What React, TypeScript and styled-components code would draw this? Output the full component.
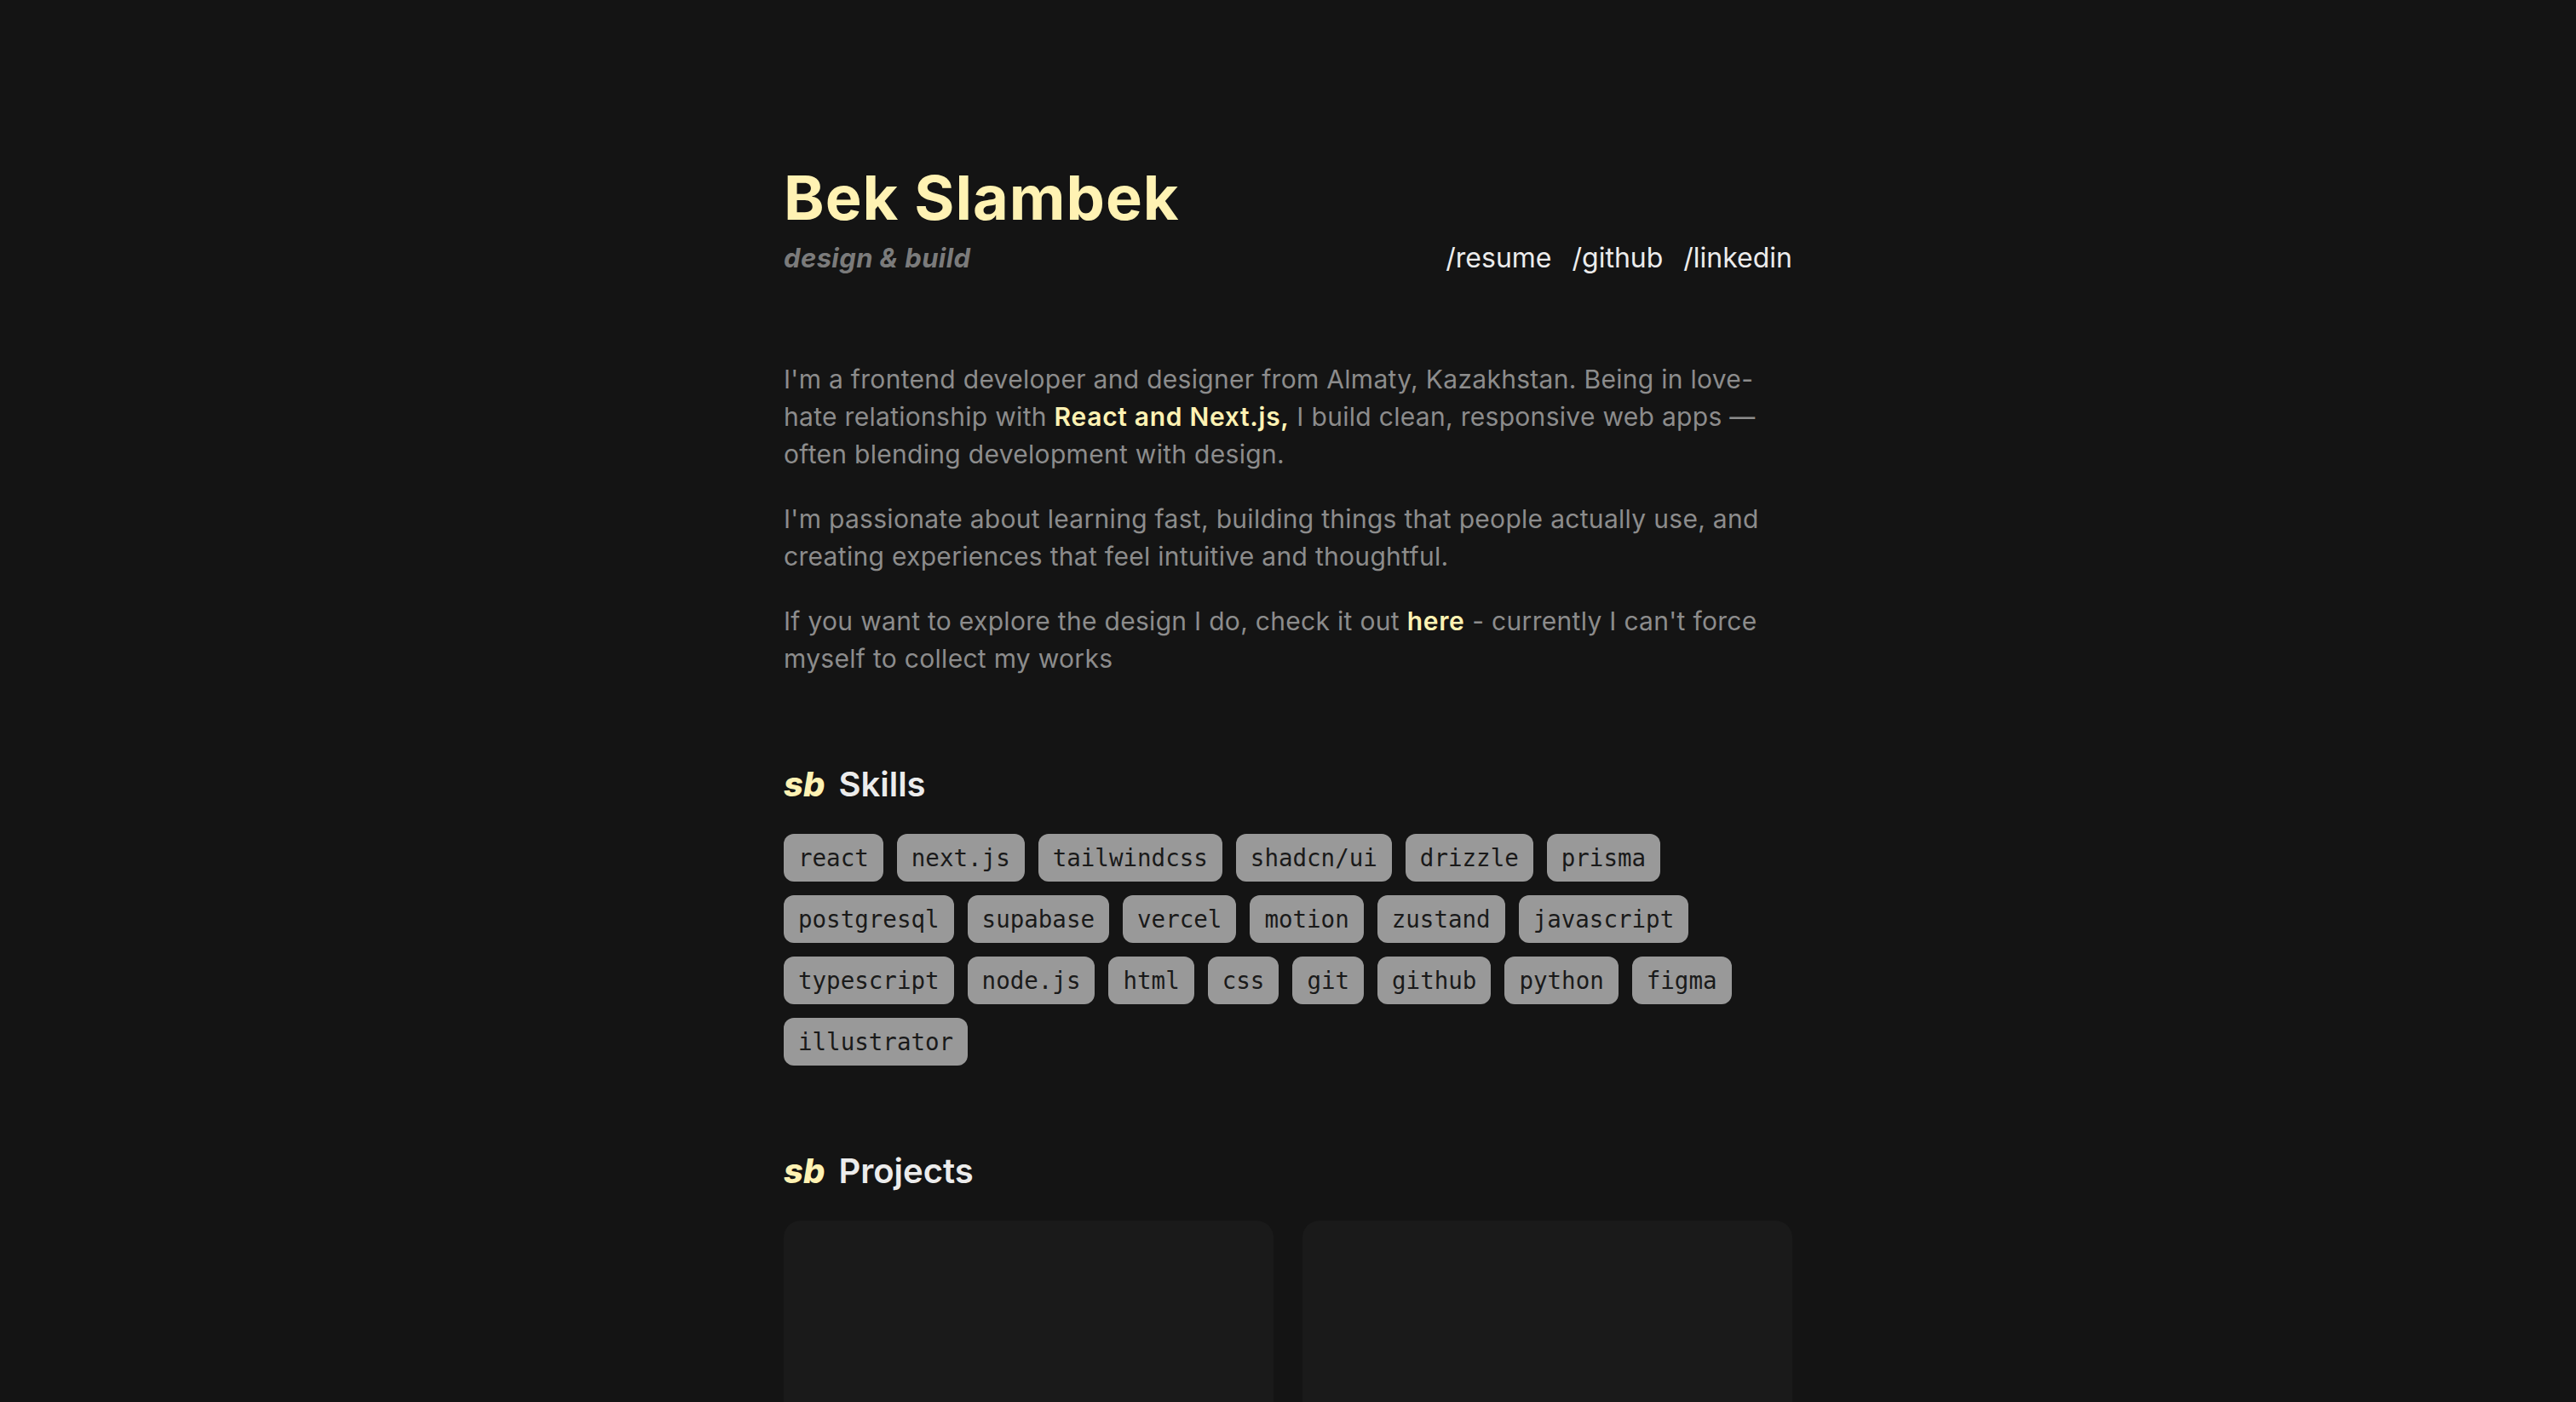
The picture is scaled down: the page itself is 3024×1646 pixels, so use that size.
import React from "react";
import styled, { createGlobalStyle } from "styled-components";

const GlobalStyle = createGlobalStyle`
  html, body {
    margin: 0;
    padding: 0;
    background: #141414;
  }
  body {
    font-family: Inter, "Noto Sans", "Liberation Sans", sans-serif;
    color: #8c8c8c;
    -webkit-font-smoothing: antialiased;
  }
  * { box-sizing: border-box; }
`;

const Page = styled.div`
  min-height: 100vh;
  background: #141414;
  overflow: hidden;
`;

const Main = styled.main`
  width: 1184px;
  margin: 0 auto;
  padding-top: 196px;
`;

const Header = styled.header`
  display: flex;
  flex-direction: column;
  gap: 14px;
`;

const Name = styled.h1`
  margin: 0;
  font-size: 72px;
  line-height: 1;
  font-weight: 700;
  color: #fff2b3;
  letter-spacing: 1px;
`;

const SubRow = styled.div`
  display: flex;
  justify-content: space-between;
  align-items: baseline;
  line-height: 42px;
`;

const Tagline = styled.span`
  font-size: 31px;
  font-weight: 700;
  font-style: italic;
  color: #7b7b7b;
  letter-spacing: 0.4px;
`;

const Nav = styled.nav`
  display: flex;
  gap: 24px;
`;

const NavLink = styled.a`
  font-size: 32px;
  font-weight: 400;
  color: #ececec;
  text-decoration: none;
`;

const About = styled.section`
  margin-top: 99px;
  display: flex;
  flex-direction: column;
  gap: 32px;
`;

const Para = styled.p`
  margin: 0;
  font-size: 30px;
  line-height: 44px;
  color: #8c8c8c;
  letter-spacing: 0.3px;
`;

const Hl = styled.a`
  color: #fff2b3;
  font-weight: 600;
  text-decoration: none;
  letter-spacing: 0.7px;
`;

const Section = styled.section`
  margin-top: 100px;
`;

const SectionTitle = styled.h2`
  margin: 0 0 33px;
  font-size: 40px;
  line-height: 51px;
  font-weight: 600;
  color: #ececec;
  display: flex;
  gap: 16px;
  align-items: baseline;
`;

const Mark = styled.span`
  color: #fff2b3;
  font-weight: 800;
  font-style: italic;
`;

const TagList = styled.ul`
  list-style: none;
  margin: 0;
  padding: 0;
  display: flex;
  flex-wrap: wrap;
  gap: 16px;
`;

const Tag = styled.li`
  height: 56px;
  padding: 0 17px;
  display: flex;
  align-items: center;
  background: #999999;
  color: #1a1a1a;
  border-radius: 12px;
  font-family: "DejaVu Sans Mono", "Liberation Mono", monospace;
  font-size: 27.5px;
`;

const ProjectsSection = styled(Section)`
  margin-top: 98px;
`;

const Grid = styled.div`
  display: grid;
  grid-template-columns: 1fr 1fr;
  gap: 34px;
`;

const Card = styled.div`
  height: 420px;
  background: #1a1a1a;
  border-radius: 20px;
`;

const skills = [
  "react", "next.js", "tailwindcss", "shadcn/ui", "drizzle", "prisma",
  "postgresql", "supabase", "vercel", "motion", "zustand", "javascript",
  "typescript", "node.js", "html", "css", "git", "github", "python", "figma",
  "illustrator",
];

export default function App() {
  return (
    <Page>
      <GlobalStyle />
      <Main>
        <Header>
          <Name>Bek Slambek</Name>
          <SubRow>
            <Tagline>design &amp; build</Tagline>
            <Nav>
              <NavLink href="#">/resume</NavLink>
              <NavLink href="#">/github</NavLink>
              <NavLink href="#">/linkedin</NavLink>
            </Nav>
          </SubRow>
        </Header>
        <About>
          <Para>
            I'm a frontend developer and designer from Almaty, Kazakhstan. Being in love-hate relationship with{" "}
            <Hl href="#">React and Next.js,</Hl> I build clean, responsive web apps — often blending development with design.
          </Para>
          <Para>
            I'm passionate about learning fast, building things that people actually use, and creating experiences that feel intuitive and thoughtful.
          </Para>
          <Para>
            If you want to explore the design I do, check it out <Hl href="#">here</Hl> - currently I can't force myself to collect my works
          </Para>
        </About>
        <Section>
          <SectionTitle>
            <Mark>sb</Mark>
            <span>Skills</span>
          </SectionTitle>
          <TagList>
            {skills.map((s) => (
              <Tag key={s}>{s}</Tag>
            ))}
          </TagList>
        </Section>
        <ProjectsSection>
          <SectionTitle>
            <Mark>sb</Mark>
            <span>Projects</span>
          </SectionTitle>
          <Grid>
            <Card />
            <Card />
          </Grid>
        </ProjectsSection>
      </Main>
    </Page>
  );
}
